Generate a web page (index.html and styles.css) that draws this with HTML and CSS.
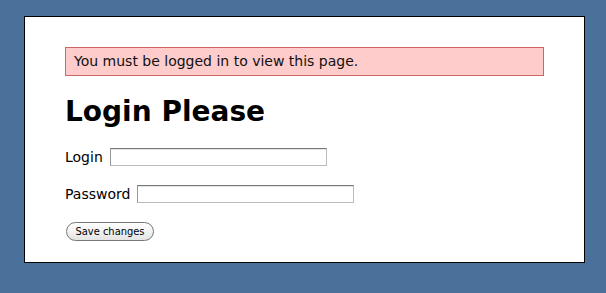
FILE: index.html
```html
<!DOCTYPE html>
<html>
<head>
<meta charset="utf-8">
<link rel="stylesheet" href="styles.css">
</head>
<body>
<div class="page">
  <div class="flash">You must be logged in to view this page.</div>
  <h1 class="title">Login Please</h1>
  <form class="form">
    <div class="row"><label class="label">Login</label><input class="field" type="text"></div>
    <div class="row"><label class="label">Password</label><input class="field" type="password"></div>
    <div class="actions"><button class="btn" type="button">Save changes</button></div>
  </form>
</div>
</body>
</html>
```
FILE: styles.css
```css
html, body {
  margin: 0;
  padding: 0;
  background: #4a7199;
  height: 100%;
}
body {
  padding: 16px 0 0 24px;
  box-sizing: border-box;
  font-family: "DejaVu Sans", Verdana, sans-serif;
  color: #000;
}
.page {
  width: 479px;
  height: 215px;
  background: #fff;
  border: 1px solid #000;
  padding: 30px 40px 0 40px;
}
.flash {
  height: 27px;
  line-height: 27px;
  background: #fcc;
  border: 1px solid #c66;
  padding: 0 8px;
  font-size: 14px;
  color: #111;
}
.title {
  margin: 19px 0 0 0;
  font-size: 28px;
  line-height: 34px;
  font-weight: bold;
}
.form {
  margin: 18px 0 0 0;
}
.row {
  display: flex;
  align-items: center;
  gap: 7px;
  height: 20px;
  margin-bottom: 17px;
  font-size: 14px;
}
.field {
  box-sizing: border-box;
  width: 217px;
  height: 18px;
  padding: 0;
  border: 1px solid #bbb;
  border-top-color: #777;
  border-left-color: #999;
  box-shadow: inset 0 1px 0 #e4e4e4;
  margin: 0;
}
.actions {
  display: flex;
  padding-left: 1px;
  padding-top: 1px;
}
.btn {
  height: 19px;
  width: 88px;
  padding: 0;
  border: 1px solid #777;
  border-radius: 10px;
  background: linear-gradient(#fff, #f2f2f2 50%, #e4e4e4);
  font-family: "DejaVu Sans Condensed", "DejaVu Sans", sans-serif;
  font-size: 11px;
  color: #000;
}
```
